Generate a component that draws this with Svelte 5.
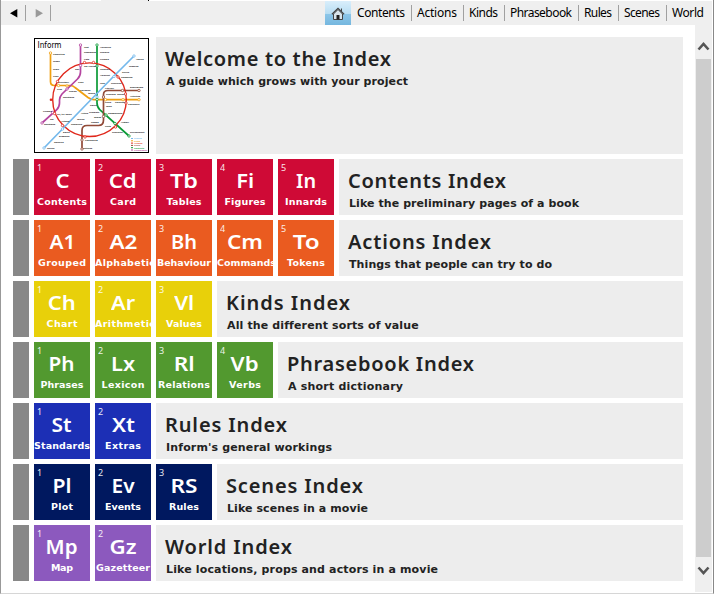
<script>
  const nav = [
    ['Contents', 48], ['Actions', 40], ['Kinds', 29], ['Phrasebook', 62],
    ['Rules', 28], ['Scenes', 36], ['World', 32]
  ];
  const rows = [
    { color: '#cf0a36', title: 'Contents Index', tw: 158, sub: 'Like the preliminary pages of a book', sw: 230,
      tiles: [['C', 'Contents', 50, 14], ['Cd', 'Card', 26, 28], ['Tb', 'Tables', 35, 28], ['Fi', 'Figures', 41, 18], ['In', 'Innards', 42, 20]] },
    { color: '#ea5b20', title: 'Actions Index', tw: 143, sub: 'Things that people can try to do', sw: 203,
      tiles: [['A1', 'Grouped', 48, 26], ['A2', 'Alphabetic', 60, 28], ['Bh', 'Behaviour', 54, 26], ['Cm', 'Commands', 59, 36], ['To', 'Tokens', 38, 27]] },
    { color: '#e8d00a', title: 'Kinds Index', tw: 124, sub: 'All the different sorts of value', sw: 191,
      tiles: [['Ch', 'Chart', 31, 28], ['Ar', 'Arithmetic', 60, 24], ['Vl', 'Values', 36, 20]] },
    { color: '#52992f', title: 'Phrasebook Index', tw: 187, sub: 'A short dictionary', sw: 115,
      tiles: [['Ph', 'Phrases', 43, 26], ['Lx', 'Lexicon', 43, 24], ['Rl', 'Relations', 52, 21], ['Vb', 'Verbs', 32, 28]] },
    { color: '#1c2fb5', title: 'Rules Index', tw: 122, sub: "Inform's general workings", sw: 166,
      tiles: [['St', 'Standards', 56, 20], ['Xt', 'Extras', 36, 23]] },
    { color: '#00185f', title: 'Scenes Index', tw: 137, sub: 'Like scenes in a movie', sw: 141,
      tiles: [['Pl', 'Plot', 22, 19], ['Ev', 'Events', 36, 23], ['RS', 'Rules', 30, 27]] },
    { color: '#8c59be', title: 'World Index', tw: 127, sub: 'Like locations, props and actors in a movie', sw: 272,
      tiles: [['Mp', 'Map', 22, 32], ['Gz', 'Gazetteer', 54, 27]] }
  ];
  const labels = [
    [53, 55, 'Properties'], [53, 62, 'Shape'], [53, 69.5, 'Score'], [53, 77, 'Time'], [58, 82.5, 'Inventory'], [57, 89.5, 'Kind'],
    [84, 48, 'Text'], [84, 53, 'Responses'], [84, 60, 'Lists'], [84, 66.8, 'Say Phrase'], [75, 69.5, 'Not'], [78, 83, 'Time'],
    [69, 92.3, 'Region'], [63, 98.3, 'Equations'], [80, 91.3, 'Variables'], [88, 94.3, 'Tables'],
    [100, 48, 'Advanced'], [100, 53, 'Reading'], [100, 60, 'Phrases'], [100, 69.5, 'Location'], [100, 76, 'Adjacent'], [100, 84, 'Lock'],
    [136, 60, 'Asking'], [129, 66.5, 'Showing'], [122, 72.5, 'Giving'], [121, 78.3, 'Command'], [111, 84.3, 'Checking'],
    [130, 88, 'Dimensions'], [105, 89.2, 'Literacy'], [106, 95, 'Changes'], [117, 95, 'Sound'], [130, 97.2, 'Activities'],
    [105, 103.2, 'Rules'], [115, 103.2, 'Calendar'], [128, 105.2, 'Procedure'], [106, 106.5, 'Table'],
    [90, 106, 'Going'], [89, 113.4, 'Translate'], [81, 113.5, 'Acting'], [94, 118, 'Words'], [108, 113.6, 'Components'],
    [77, 119.5, 'Taking'], [71, 125, 'Removing'], [91, 123.2, 'Rooms'], [121, 123.2, 'History'], [105, 127, 'Units'],
    [112, 133, 'Character'], [130, 133.2, 'Environment'], [43, 111.5, 'Phrases'], [57, 115, 'Try, try again'],
    [50, 120, 'Say'], [44, 125, 'Equations'], [61, 122, 'Actions'], [63, 133.2, 'Doing'], [59, 136.8, 'Dropping'],
    [54, 143, 'Opening'], [47, 149, 'Seeing'], [85, 141.3, 'Procedures'], [83, 149, 'Settings']
  ];
  const stops = [
    [50.5, 53, '#f0a010'], [80.5, 45, '#b545a0'], [97, 45, '#0b9a36'], [134, 56, '#74b9ec'], [44, 148, '#74b9ec'],
    [129, 136, '#0b9a36'], [42, 123, '#b545a0'], [52.5, 112.5, '#b545a0'], [82, 149, '#914a38'], [82, 140, '#914a38'],
    [139, 90.5, '#914a38'], [139, 99.7, '#f0a010'], [58.5, 85.5, '#f0a010'], [67, 86, '#f0a010'], [67, 89, '#b545a0'],
    [80.5, 65.5, '#b545a0'], [97, 66, '#0b9a36'], [84.5, 62.5, '#e0281c'], [93.5, 62.5, '#e0281c'], [57.5, 81.5, '#e0281c'],
    [114, 76.5, '#74b9ec'], [118, 77, '#e0281c'], [97, 97, '#74b9ec'], [97, 99.5, '#0b9a36'], [103.5, 97, '#914a38'],
    [105.5, 99.7, '#f0a010'], [123, 99.7, '#f0a010'], [122.5, 90.5, '#914a38'], [125.5, 94, '#e0281c'], [126, 103, '#e0281c'],
    [103.5, 116.5, '#914a38'], [106, 115, '#0b9a36'], [115, 123.5, '#0b9a36'], [115.5, 127, '#e0281c'], [85, 137, '#e0281c'],
    [62.5, 125.5, '#e0281c'], [62.5, 129, '#74b9ec'], [54.5, 113.5, '#e0281c']
  ];
  const legend = [['#74b9ec', 'Scenes'], ['#f0a010', 'Kinds'], ['#e0281c', 'Actions'], ['#914a38', 'Rules'], ['#0b9a36', 'Contents'], ['#b545a0', 'Phrasebook']];

  // Spreads the letters so that the text fills the requested width.
  function track(node, width) {
    const range = document.createRange();
    range.selectNodeContents(node);
    const natural = range.getBoundingClientRect().width;
    const gap = (width - natural) / Math.max(1, node.textContent.length - 1);
    node.style.letterSpacing = gap + 'px';
    node.style.marginRight = -gap + 'px';
  }

  // Widens the glyphs themselves, keeping them centred.
  function stretch(node, width) {
    node.style.transform = `scaleX(${width / node.getBoundingClientRect().width})`;
  }
</script>

<div class="window">
  <div class="tab"></div>
  <header>
    <div class="history">
      <svg width="52" height="24" viewBox="0 0 52 24">
        <path d="M9 12.300 16.300 8v8.600z" fill="#000" /><path d="M42 12.300 34.700 8v8.600z" fill="#999" />
        <path d="M24.500 4v16M49.500 4v16" stroke="#a0a0a0" />
      </svg>
    </div>
    <nav>
      <span class="home">
        <svg width="14" height="14" viewBox="0 0 14 14">
          <path d="M2.500 7v5.500h9V7L7 2.500z" fill="#d9e5ec" stroke="#444" />
          <path d="M.9 7.300 7 1.300l6.100 6" fill="none" stroke="#444" stroke-width="1.200" />
          <path d="M10.500 1.500v3" stroke="#444" /><path d="M5.500 8h3v4.500h-3z" fill="#222" />
        </svg>
      </span>
      {#each nav as [name, w]}
        <span class="link"><span class="txt" style:width="{w}px"><span use:track={w}>{name}</span></span></span>
      {/each}
    </nav>
  </header>
  <div class="body">
    <main>
      <div class="intro">
        <svg class="map" width="115" height="115" viewBox="34 38 115 115">
          <rect x="34.500" y="38.500" width="114" height="114" fill="#fff" stroke="#000" />
          <text x="37.500" y="47.700" class="logo" textLength="24" lengthAdjust="spacingAndGlyphs">Inform</text>
          <g fill="none" stroke-width="1.700">
            <path stroke="#f0a010" d="M50.500 53V81.500q0 4 4 4H70q3 0 5 2L88 97.500q3 2.200 6 2.200h45" />
            <path stroke="#b545a0" d="M80.500 45v27q0 4-3 7L62 94q-2.500 3-2.500 6v3q0 4-3 7L42 123" />
            <path stroke="#0b9a36" d="M97 45v58q0 4 3 7l29 26" />
            <path stroke="#914a38" d="M139 90.500h-31q-4.500 0-4.500 4V120q0 5.500-5 5.500H87q-5 0-5 5V149" />
            <circle cx="89.500" cy="99.700" r="36.800" stroke="#e0281c" stroke-width="1.400" />
            <path stroke="#74b9ec" d="M134 56 113 77 62.500 129 44 148" />
          </g>
          {#each stops as [x, y, c]}
            <circle cx={x} cy={y} r="1.200" fill="#fff" stroke={c} stroke-width=".8" />
          {/each}
          <circle cx="51" cy="99.700" r="1.300" fill="#e0281c" />
          {#each labels as [x, y, t]}<text {x} {y} class="stop">{t}</text>{/each}
          {#each legend as [c, t], i}
            <path d="M131 {138.500 + i * 2.300}h2" stroke={c} />
            <text x="134" y={139.300 + i * 2.300} class="stop" fill={c}>{t}</text>
          {/each}
        </svg>
        <section class="panel">
          <h1><span use:track={226}>Welcome to the Index</span></h1>
          <p><span use:track={242}>A guide which grows with your project</span></p>
        </section>
      </div>
      {#each rows as row}
        <div class="row">
          <i class="bar"></i>
          {#each row.tiles as [sym, name, w, sw], i}
            <div class="tile" style:background={row.color}>
              <small>{i + 1}</small>
              <b class="symbol"><span use:stretch={sw}>{sym}</span></b>
              <span class="name" class:wide={w > 56}><span use:track={w}>{name}</span></span>
            </div>
          {/each}
          <section class="panel">
            <h1><span use:track={row.tw}>{row.title}</span></h1>
            <p><span use:track={row.sw}>{row.sub}</span></p>
          </section>
        </div>
      {/each}
    </main>
    <aside>
      <svg width="17" height="34" viewBox="0 0 17 34"><path d="m3.500 24.500 5-5.500 5 5.500" /></svg>
      <div class="thumb"></div>
      <svg width="17" height="34" viewBox="0 0 17 34"><path d="m3.500 10.500 5 5.500 5-5.500" /></svg>
    </aside>
  </div>
</div>

<style>
  :global(body) { background: #fff; overflow: hidden; }
  .window { width: 714px; height: 594px; box-sizing: border-box; border-left: 1px solid #999; border-right: 1px solid #888; border-bottom: 1px solid #d6d6d6; padding: 0 1px 1px 0; background: #fff; font-family: 'Noto Sans', 'Liberation Sans', sans-serif; }
  .tab { height: 1px; width: 47px; margin-left: 100px; background: #efefef; border-right: 1px solid #000; }
  header { height: 24px; background: #efefef; display: flex; justify-content: space-between; }
  .history svg { display: block; }
  nav { display: flex; align-items: center; font-size: 12px; color: #000; padding-right: 2px; }
  .home { width: 26px; height: 24px; display: flex; align-items: center; justify-content: center; padding-top: 2px; box-sizing: border-box; background: linear-gradient(#d9eefb 0, #b9def3 52%, #8dc6e8 54%, #75b7df 100%); }
  .link { display: flex; align-items: center; height: 16px; padding: 0 6px 0 5px; border-right: 1px solid #a0a0a0; }
  .link:nth-child(2) { padding-left: 6px; }
  .link:last-child { border: 0; padding-right: 6px; }
  .txt { white-space: nowrap; line-height: 16px; }
  .body { display: flex; justify-content: space-between; height: 567px; }
  main { width: 670px; padding: 12px 0 0 12px; display: flex; flex-direction: column; gap: 5px; box-sizing: content-box; }
  .intro { display: flex; gap: 7px; height: 117px; padding-left: 21px; }
  .map { margin-top: 1px; flex: none; }
  .logo { font: 8px 'DejaVu Sans', sans-serif; fill: #000; }
  .stop { font: 600 2.300px 'Noto Sans', sans-serif; }
  .row { display: flex; gap: 5px; height: 56px; }
  .bar { width: 16px; background: #888; flex: none; }
  .tile { width: 56px; flex: none; overflow: hidden; color: #fff; display: flex; flex-direction: column; align-items: center; }
  small { align-self: flex-start; font-size: 9px; line-height: 12px; height: 12px; margin: 3px 0 0 3px; opacity: .9; }
  .symbol { font-size: 20px; font-weight: 600; line-height: 22px; height: 22px; margin-top: -4px; white-space: nowrap; }
  .symbol span { display: inline-block; }
  .name { font: bold 9.500px/12px 'DejaVu Sans', sans-serif; margin-top: 4px; white-space: nowrap; }
  .wide { align-self: flex-start; }
  .panel { flex: 1; background: #ededed; color: #222; padding: 9px 0 0 9px; box-sizing: border-box; white-space: nowrap; }
  h1 { font-size: 20px; font-weight: 600; line-height: 26px; margin: 0; }
  p { font: bold 11px/14px 'DejaVu Sans', sans-serif; margin: 3px 0 0 1px; }
  aside { width: 17px; background: #efefef; display: flex; flex-direction: column; align-items: center; }
  aside svg { flex: none; fill: none; stroke: #555; stroke-width: 2.600; }
  .thumb { width: 15px; flex: none; height: 498px; background: #cdcdcd; }
</style>
